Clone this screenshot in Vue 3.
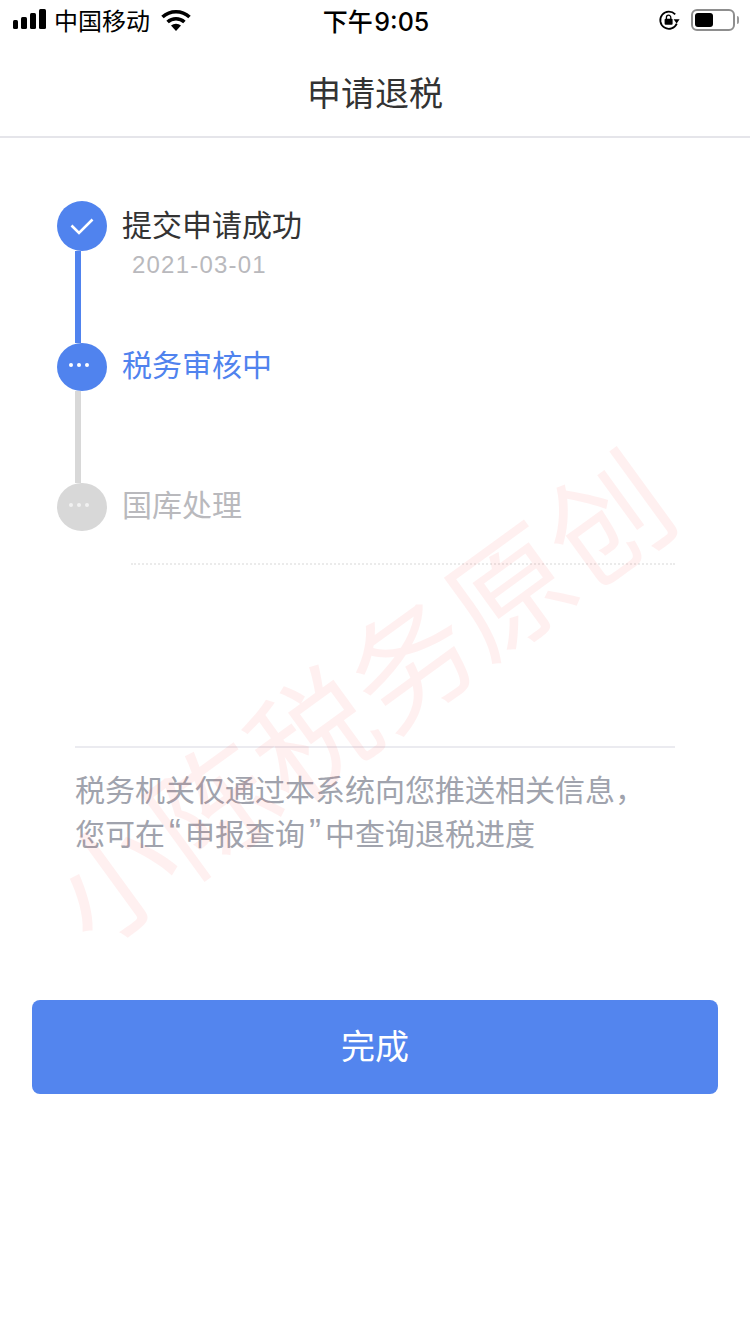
<template>
  <div class="page">
    <div class="status-bar">
      <div class="status-left">
        <svg class="signal" width="34" height="22" viewBox="0 0 34 22">
          <rect x="0" y="11" width="5" height="9" rx="1.5" />
          <rect x="8" y="8" width="6" height="12" rx="1.5" />
          <rect x="17" y="4" width="6" height="16" rx="1.5" />
          <rect x="26" y="0" width="7" height="20" rx="1.5" />
        </svg>
        <span class="carrier">中国移动</span>
        <svg class="wifi" width="30" height="22" viewBox="0 0 30 22">
          <path d="M1.5 8 A20 20 0 0 1 28.5 8" fill="none" stroke="#000" stroke-width="3.6" />
          <path d="M6.6 13 A12.5 12.5 0 0 1 23.4 13" fill="none" stroke="#000" stroke-width="3.6" />
          <path d="M10 16.6 A7.5 7.5 0 0 1 20 16.6 L15 22 Z" fill="#000" />
        </svg>
      </div>
      <span class="clock">下午 9:05</span>
      <div class="status-right">
        <svg width="22" height="22" viewBox="0 0 22 22">
          <path d="M17.2 5.4 A8.6 8.6 0 1 0 18.8 14.6" fill="none" stroke="#000" stroke-width="1.8" />
          <path d="M15.6 10.2 L21.6 10.2 L18.6 14.4 Z" fill="#000" />
          <rect x="6.6" y="9.8" width="8" height="6" rx="1" fill="#000" />
          <path d="M8.4 10 V8.4 A2.2 2.2 0 0 1 12.8 8.4 V10" fill="none" stroke="#000" stroke-width="1.3" />
        </svg>
        <div class="battery">
          <div class="battery-fill"></div>
        </div>
        <div class="battery-cap"></div>
      </div>
    </div>

    <header class="nav">申请退税</header>

    <main class="content">
      <ul class="steps">
        <li v-for="(step, i) in steps" :key="step.title" class="step" :class="'step--' + step.state">
          <div class="step-node">
            <div class="step-dot" :class="{ 'step-dot--first': i === 0 }">
              <svg v-if="step.state === 'done'" width="26" height="20" viewBox="0 0 26 20">
                <path d="M2.5 9.5 L10 17 L23.5 3.5" fill="none" stroke="#fff" stroke-width="2.6" />
              </svg>
              <span v-else class="dots"><i></i><i></i><i></i></span>
            </div>
            <div v-if="i < steps.length - 1" class="step-line"></div>
          </div>
          <div class="step-text" :class="{ 'step-text--first': i === 0 }">
            <div class="step-title">{{ step.title }}</div>
            <div v-if="step.date" class="step-date">{{ step.date }}</div>
          </div>
        </li>
      </ul>

      <div class="dotted"></div>

      <p class="note">
        税务机关仅通过本系统向您推送相关信息，<br />您可在<span class="quote">“</span>申报查询<span class="quote">”</span>中查询退税进度
      </p>

      <button class="done-btn" type="button">完成</button>
    </main>

    <div class="watermark">小陈税务原创</div>
  </div>
</template>

<script setup>
const steps = [
  { title: '提交申请成功', date: '2021-03-01', state: 'done' },
  { title: '税务审核中', date: '', state: 'active' },
  { title: '国库处理', date: '', state: 'todo' }
]
</script>

<style>
html,
body {
  background: #fff;
}
</style>

<style scoped>
.page {
  position: relative;
  width: 750px;
  height: 1334px;
  overflow: hidden;
  background: #fff;
  font-family: "Liberation Sans", "Noto Sans CJK SC", sans-serif;
}

.status-bar {
  height: 40px;
  display: grid;
  grid-template-columns: 1fr auto 1fr;
  align-items: center;
  padding: 0 11px 0 13px;
  color: #000;
}

.status-left {
  display: flex;
  align-items: center;
}

.signal {
  fill: #000;
}

.carrier {
  font-size: 24px;
  margin: -2px 0 0 7px;
}

.wifi {
  margin-left: 11px;
}

.clock {
  font-family: Inter, "Noto Sans CJK SC", sans-serif;
  font-size: 25px;
  font-weight: 500;
  word-spacing: -5px;
}

.status-right {
  display: flex;
  align-items: center;
  justify-content: flex-end;
}

.battery {
  width: 44px;
  height: 22px;
  margin-left: 11px;
  padding: 2px;
  box-sizing: border-box;
  border: 2px solid #8e8e8e;
  border-radius: 6px;
}

.battery-fill {
  width: 18px;
  height: 100%;
  background: #000;
  border-radius: 3px;
}

.battery-cap {
  width: 2px;
  height: 8px;
  margin-left: 2px;
  background: #9a9a9a;
  border-radius: 0 2px 2px 0;
}

.nav {
  height: 98px;
  box-sizing: border-box;
  padding-top: 6px;
  display: flex;
  align-items: center;
  justify-content: center;
  border-bottom: 2px solid #e5e5ea;
  font-size: 34px;
  color: #333;
}

.content {
  padding: 63px 32px 0;
}

.steps {
  list-style: none;
  margin: 0 0 0 25px;
  padding: 0;
}

.step {
  display: flex;
  gap: 15px;
}

.step-node {
  width: 50px;
  display: flex;
  flex-direction: column;
}

.step-dot {
  width: 50px;
  height: 48px;
  border-radius: 50%;
  display: flex;
  align-items: center;
  justify-content: center;
}

.step-dot--first {
  height: 50px;
}

.step-line {
  width: 6px;
  height: 92px;
  margin-left: 18px;
}

.step--done .step-dot,
.step--done .step-line,
.step--active .step-dot {
  background: #5083ee;
}

.step--active .step-line,
.step--todo .step-dot {
  background: #d8d8d8;
}

.dots {
  display: flex;
  gap: 4px;
  margin: -4px 6px 0 0;
}

.dots i {
  width: 4px;
  height: 4px;
  border-radius: 50%;
  background: #fff;
}

.step--todo .dots i {
  background: #f1f1f1;
}

.step-text--first {
  padding-top: 2px;
}

.step-title {
  font-size: 30px;
  line-height: 46px;
  color: #333;
}

.step--active .step-title {
  color: #5083ee;
}

.step--todo .step-title {
  color: #b9b9bd;
}

.step-date {
  margin-left: 10px;
  font-size: 24px;
  line-height: 32px;
  letter-spacing: 1.2px;
  color: #b9b9bd;
}

.dotted {
  margin: 32px 43px 0 99px;
  border-top: 2px dotted #ebebeb;
}

.note {
  margin: 181px 43px 0 43px;
  padding-top: 21px;
  border-top: 2px solid #ebebf0;
  font-size: 30px;
  line-height: 44px;
  color: #a0a3ad;
  white-space: nowrap;
}

.quote {
  display: inline-block;
  width: 20px;
  font-size: 36px;
  line-height: 0;
  text-align: center;
}

.done-btn {
  display: block;
  width: 686px;
  height: 94px;
  margin-top: 143px;
  padding: 0 0 6px;
  border: 0;
  border-radius: 8px;
  background: #5385ee;
  color: #fff;
  font-family: inherit;
  font-size: 34px;
}

/* sits over the page content, like the original's stamp */
.watermark {
  position: absolute;
  left: 357px;
  top: 693px;
  transform: translate(-50%, -50%) rotate(-36deg);
  font-size: 122px;
  font-weight: 400;
  white-space: nowrap;
  color: rgba(255, 60, 60, 0.08);
  pointer-events: none;
}
</style>
